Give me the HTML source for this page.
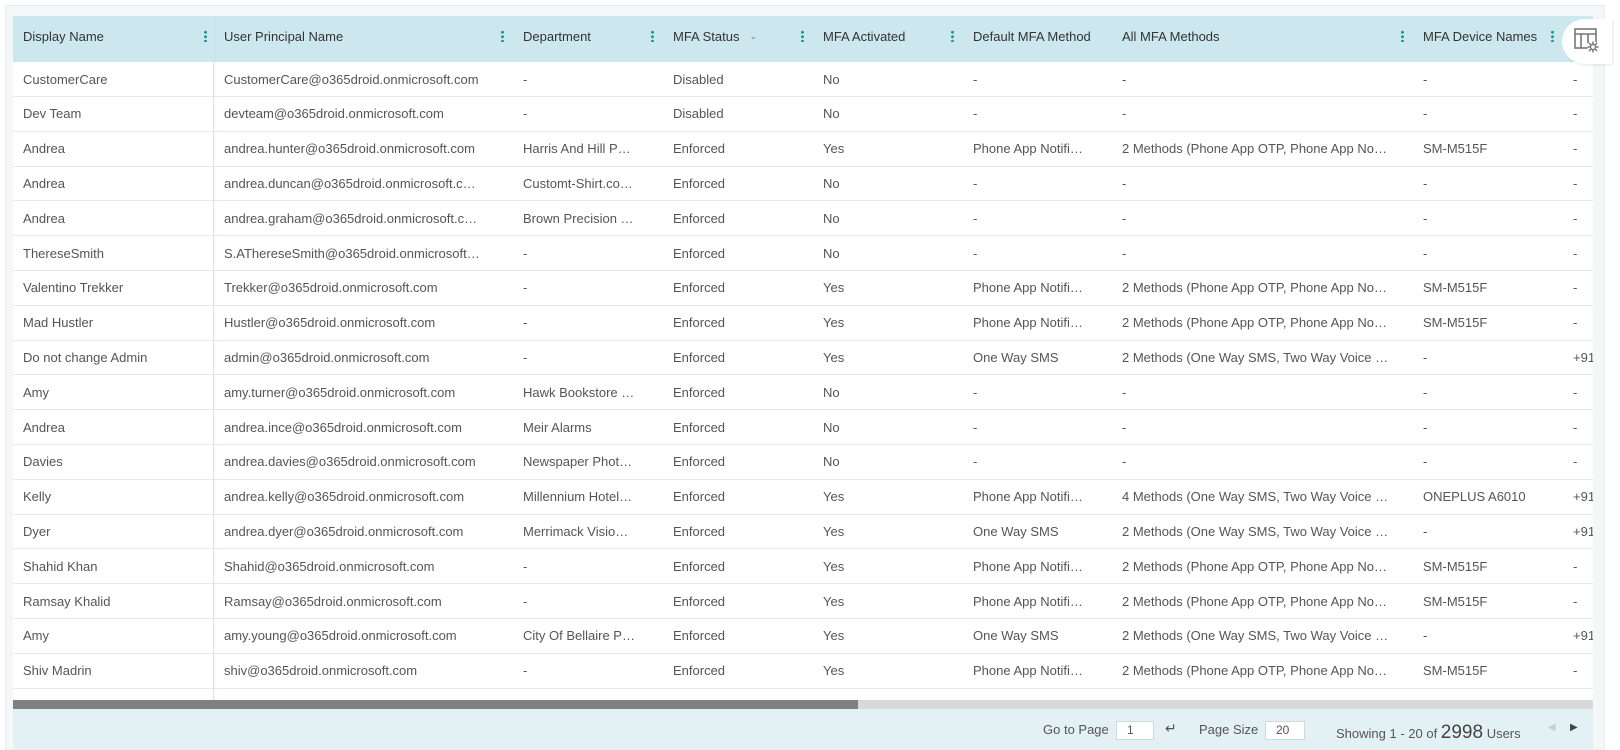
<!DOCTYPE html>
<html><head><meta charset="utf-8"><style>
*{margin:0;padding:0;box-sizing:border-box}
body{width:1620px;height:750px;background:#fff;font-family:"Liberation Sans",Arial,sans-serif;overflow:hidden;position:relative}
#wrap{position:absolute;left:5px;top:5px;width:1600px;height:745px;background:#f3f7f8;border:1px solid #e8eef0}
#tbl{position:absolute;left:13px;top:16px;width:1580px;height:693px;overflow:hidden;background:#fff}
.row{position:absolute;left:0;height:35px;width:1700px;border-bottom:1px solid #e6e9ea;font-size:13px;color:#555}
.hdr{top:0;height:46px;background:#cde7ee;color:#333;border-bottom:none}
.hdr .c{padding-bottom:5px}
.c{position:absolute;top:0;height:100%;padding-left:10px;white-space:nowrap;overflow:hidden;display:flex;align-items:center}
.k{position:absolute;top:14px;width:3px;height:12px;background:radial-gradient(circle,#1a9a94 1.4px,transparent 1.6px) 0 0/3px 4.5px repeat-y}
#sep{position:absolute;left:200px;top:0;width:1px;height:693px;background:#dde3e5;box-shadow:1px 0 2px rgba(0,0,0,.06)}
#sb{position:absolute;left:13px;top:700px;width:1580px;height:9px;background:#d9d9d9}
#sb div{width:845px;height:9px;background:#808080}
#ft{position:absolute;left:13px;top:709px;width:1580px;height:40px;background:#e3f1f5;font-size:13px;color:#555}
.ib{position:absolute;top:12px;height:19px;background:#fff;border:1px solid #cfd8dc;font-size:12px;padding-left:10px;line-height:17px}
#gear{position:absolute;left:1562px;top:19px;width:50px;height:45px;background:#fff;border-radius:23px 0 0 23px;box-shadow:1px 1px 2px rgba(0,0,0,.1)}
</style></head><body>
<div id="wrap"></div>
<div id="tbl">
<div class="row hdr">
<div class="c" style="left:0;width:200px">Display Name</div><div class="k" style="left:191px"></div>
<div class="c" style="left:201px;width:299px">User Principal Name</div><div class="k" style="left:488px"></div>
<div class="c" style="left:500px;width:150px">Department</div><div class="k" style="left:638px"></div>
<div class="c" style="left:650px;width:150px">MFA Status <span style="font-size:9px;color:#777;margin-left:10px">&#8964;</span></div><div class="k" style="left:788px"></div>
<div class="c" style="left:800px;width:150px">MFA Activated</div><div class="k" style="left:938px"></div>
<div class="c" style="left:950px;width:150px">Default MFA Method</div>
<div class="c" style="left:1099px;width:301px">All MFA Methods</div><div class="k" style="left:1388px"></div>
<div class="c" style="left:1400px;width:150px">MFA Device Names</div><div class="k" style="left:1538px"></div>
</div>
<div id="rows"></div>
<div id="sep"></div>
</div>
<div id="gear"><svg width="50" height="45" viewBox="0 0 50 45"><g fill="none" stroke="#777" stroke-width="1.6"><rect x="13" y="10" width="21" height="19"/><line x1="13" y1="15" x2="34" y2="15"/><line x1="19" y1="15" x2="19" y2="29"/><line x1="26" y1="15" x2="26" y2="24"/><circle cx="31" cy="28" r="3.2" stroke="#fff" stroke-width="5"/></g><g stroke="#777" stroke-width="1.5"><line x1="31" y1="22.5" x2="31" y2="33.5"/><line x1="25.5" y1="28" x2="36.5" y2="28"/><line x1="27" y1="24" x2="35" y2="32"/><line x1="35" y1="24" x2="27" y2="32"/></g><circle cx="31" cy="28" r="2.5" fill="#fff" stroke="#777" stroke-width="1.3"/></svg></div>
<div id="sb"><div></div></div>
<div id="ft">
<span style="position:absolute;left:1030px;top:13px">Go to Page</span>
<div class="ib" style="left:1103px;width:38px">1</div>
<span style="position:absolute;left:1152px;top:11px;font-size:14px">&#8629;</span>
<span style="position:absolute;left:1186px;top:13px">Page Size</span>
<div class="ib" style="left:1252px;width:40px">20</div>
<span style="position:absolute;left:1323px;top:13px">Showing 1 - 20 of <span style="font-size:19px;color:#444">2998</span> Users</span>
<span style="position:absolute;left:1535px;top:13px;font-size:10px;color:#ccc">&#9664;</span>
<span style="position:absolute;left:1557px;top:13px;font-size:10px;color:#444">&#9654;</span>
</div>
<script>
var d=[
["CustomerCare","CustomerCare@o365droid.onmicrosoft.com","-","Disabled","No","-","-","-","-"],
["Dev Team","devteam@o365droid.onmicrosoft.com","-","Disabled","No","-","-","-","-"],
["Andrea","andrea.hunter@o365droid.onmicrosoft.com","Harris And Hill P…","Enforced","Yes","Phone App Notifi…","2 Methods (Phone App OTP, Phone App No…","SM-M515F","-"],
["Andrea","andrea.duncan@o365droid.onmicrosoft.c…","Customt-Shirt.co…","Enforced","No","-","-","-","-"],
["Andrea","andrea.graham@o365droid.onmicrosoft.c…","Brown Precision …","Enforced","No","-","-","-","-"],
["ThereseSmith","S.AThereseSmith@o365droid.onmicrosoft…","-","Enforced","No","-","-","-","-"],
["Valentino Trekker","Trekker@o365droid.onmicrosoft.com","-","Enforced","Yes","Phone App Notifi…","2 Methods (Phone App OTP, Phone App No…","SM-M515F","-"],
["Mad Hustler","Hustler@o365droid.onmicrosoft.com","-","Enforced","Yes","Phone App Notifi…","2 Methods (Phone App OTP, Phone App No…","SM-M515F","-"],
["Do not change Admin","admin@o365droid.onmicrosoft.com","-","Enforced","Yes","One Way SMS","2 Methods (One Way SMS, Two Way Voice …","-","+91"],
["Amy","amy.turner@o365droid.onmicrosoft.com","Hawk Bookstore …","Enforced","No","-","-","-","-"],
["Andrea","andrea.ince@o365droid.onmicrosoft.com","Meir Alarms","Enforced","No","-","-","-","-"],
["Davies","andrea.davies@o365droid.onmicrosoft.com","Newspaper Phot…","Enforced","No","-","-","-","-"],
["Kelly","andrea.kelly@o365droid.onmicrosoft.com","Millennium Hotel…","Enforced","Yes","Phone App Notifi…","4 Methods (One Way SMS, Two Way Voice …","ONEPLUS A6010","+91"],
["Dyer","andrea.dyer@o365droid.onmicrosoft.com","Merrimack Visio…","Enforced","Yes","One Way SMS","2 Methods (One Way SMS, Two Way Voice …","-","+91"],
["Shahid Khan","Shahid@o365droid.onmicrosoft.com","-","Enforced","Yes","Phone App Notifi…","2 Methods (Phone App OTP, Phone App No…","SM-M515F","-"],
["Ramsay Khalid","Ramsay@o365droid.onmicrosoft.com","-","Enforced","Yes","Phone App Notifi…","2 Methods (Phone App OTP, Phone App No…","SM-M515F","-"],
["Amy","amy.young@o365droid.onmicrosoft.com","City Of Bellaire P…","Enforced","Yes","One Way SMS","2 Methods (One Way SMS, Two Way Voice …","-","+91"],
["Shiv Madrin","shiv@o365droid.onmicrosoft.com","-","Enforced","Yes","Phone App Notifi…","2 Methods (Phone App OTP, Phone App No…","SM-M515F","-"],
["","","","","","","","",""]];
var L=[0,201,500,650,800,950,1099,1400,1550],W=[200,299,150,150,150,149,301,150,150],h="";
d.forEach(function(r,i){h+='<div class="row" style="top:'+(46+i*34.8)+'px">';r.forEach(function(t,j){h+='<div class="c" style="left:'+L[j]+'px;width:'+W[j]+'px">'+t+'</div>'});h+='</div>'});
document.getElementById("rows").innerHTML=h;
</script>
</body></html>
